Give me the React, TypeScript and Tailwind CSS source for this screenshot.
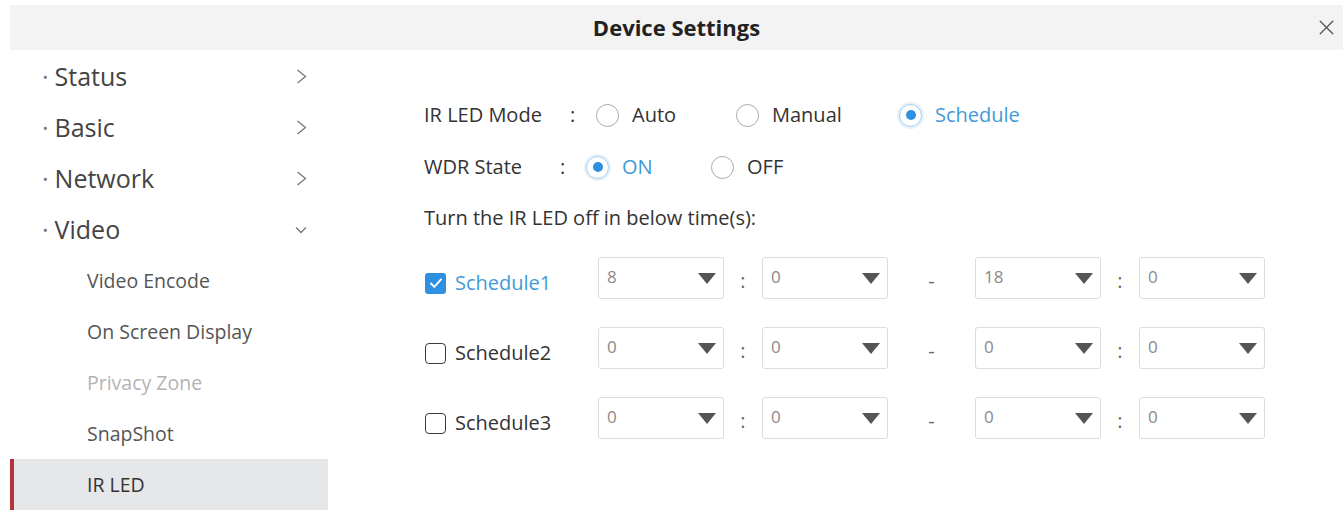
import { X } from 'lucide-react';

const mainMenu = [
  { label: 'Status', open: false },
  { label: 'Basic', open: false },
  { label: 'Network', open: false },
  { label: 'Video', open: true }
];

const subMenu = [
  { label: 'Video Encode', disabled: false, active: false },
  { label: 'On Screen Display', disabled: false, active: false },
  { label: 'Privacy Zone', disabled: true, active: false },
  { label: 'SnapShot', disabled: false, active: false },
  { label: 'IR LED', disabled: false, active: true }
];

const schedules = [
  { name: 'Schedule1', checked: true, values: ['8', '0', '18', '0'] },
  { name: 'Schedule2', checked: false, values: ['0', '0', '0', '0'] },
  { name: 'Schedule3', checked: false, values: ['0', '0', '0', '0'] }
];

const Radio = ({ label, checked }: { label: string; checked?: boolean }) => (
  <label className="flex items-center">
    {checked ? (
      <span className="flex h-[23px] w-[23px] items-center justify-center rounded-full border border-[#9ccbee] shadow-[0_0_0_2px_#e6f1fb]">
        <span className="h-[10px] w-[10px] rounded-full bg-[#2f8fe0]" />
      </span>
    ) : (
      <span className="h-[23px] w-[23px] rounded-full border border-[#a9a9a9]" />
    )}
    <span className={`ml-[13px] ${checked ? 'text-[#3f9ad8]' : 'text-[#333]'}`}>{label}</span>
  </label>
);

const Select = ({ value }: { value: string }) => (
  <div className="flex h-[42px] w-[126px] items-center justify-between rounded-[3px] border border-[#dcdcdc] pr-[7px] pl-[8px]">
    <span className="-mt-[2px] text-[17px] text-[#8a8a8a]">{value}</span>
    <svg width="18" height="11" viewBox="0 0 18 11">
      <path d="M0 0 H18 L9 11 Z" fill="#555" />
    </svg>
  </div>
);

const Checkbox = ({ checked }: { checked: boolean }) =>
  checked ? (
    <span className="flex h-[21px] w-[21px] items-center justify-center rounded-[3px] bg-[#2f8fe0]">
      <svg width="14" height="12" viewBox="0 0 14 12">
        <path d="M1.5 6 L5.3 9.8 L12.5 1.8" stroke="white" strokeWidth="1.9" fill="none" />
      </svg>
    </span>
  ) : (
    <span className="h-[21px] w-[21px] rounded-[4px] border-[1.5px] border-[#3a3a3a]" />
  );

const Chevron = ({ open }: { open: boolean }) =>
  open ? (
    <svg width="12" height="8" viewBox="0 0 12 8">
      <path d="M1 1.5 L6 6.5 L11 1.5" stroke="#777" strokeWidth="1.3" fill="none" />
    </svg>
  ) : (
    <svg width="11" height="15" viewBox="0 0 11 15">
      <path d="M1.5 1 L9.5 7.5 L1.5 14" stroke="#777" strokeWidth="1.3" fill="none" />
    </svg>
  );

export default function App() {
  return (
    <div
      className="h-[518px] w-[1343px] overflow-hidden bg-white text-[#333]"
      style={{ fontFamily: '"Open Sans", "Noto Sans", sans-serif' }}>
      <div className="relative mt-[5px] ml-[10px] flex h-[45px] items-center justify-center bg-[#f3f3f3]">
        <span className="text-[22px] font-bold text-[#222]">Device Settings</span>
        <button title="close" className="absolute top-[10px] right-[4px] text-[#555]">
          <X size={25} strokeWidth={1.3} />
        </button>
      </div>

      <div className="flex">
        <nav className="ml-[10px] w-[318px] pt-[1px]">
          {mainMenu.map((item) => (
            <div key={item.label} className="flex h-[51px] items-center justify-between pr-[21px] pl-[32px]">
              <span className="text-[25px] text-[#444]">
                <span className="mr-[6px] text-[#777]">·</span>
                {item.label}
              </span>
              <Chevron open={item.open} />
            </div>
          ))}
          {subMenu.map((item) => (
            <div
              key={item.label}
              className={`flex h-[51px] items-center text-[19.5px] ${
                item.active
                  ? 'border-l-[4px] border-[#b5333b] bg-[#e6e7e9] pl-[73px] text-[#333]'
                  : item.disabled
                  ? 'pl-[77px] text-[#b3b3b3]'
                  : 'pl-[77px] text-[#555]'
              }`}>
              {item.label}
            </div>
          ))}
        </nav>

        <section className="ml-[96px] flex-1 pt-[39px] text-[20px]">
          <div className="flex h-[52px] items-center">
            <span className="w-[146px]">IR LED Mode</span>
            <span className="w-[26px]">:</span>
            <div className="w-[140px]">
              <Radio label="Auto" />
            </div>
            <div className="w-[163px]">
              <Radio label="Manual" />
            </div>
            <Radio label="Schedule" checked />
          </div>
          <div className="flex h-[52px] items-center">
            <span className="w-[136px]">WDR State</span>
            <span className="w-[26px]">:</span>
            <div className="w-[125px]">
              <Radio label="ON" checked />
            </div>
            <Radio label="OFF" />
          </div>
          <div className="flex h-[50px] items-center">Turn the IR LED off in below time(s):</div>

          {schedules.map((s) => (
            <div key={s.name} className="flex h-[70px] items-center">
              <div className="mt-[10px] flex w-[174px] items-center pl-[1px]">
                <Checkbox checked={s.checked} />
                <span className={`ml-[9px] ${s.checked ? 'text-[#3f9ad8]' : 'text-[#333]'}`}>{s.name}</span>
              </div>
              <Select value={s.values[0]} />
              <span className="w-[38px] pt-[6px] text-center text-[#666]">:</span>
              <Select value={s.values[1]} />
              <span className="w-[87px] pt-[6px] text-center text-[#666]">-</span>
              <Select value={s.values[2]} />
              <span className="w-[38px] pt-[6px] text-center text-[#666]">:</span>
              <Select value={s.values[3]} />
            </div>
          ))}
        </section>
      </div>
    </div>
  );
}
